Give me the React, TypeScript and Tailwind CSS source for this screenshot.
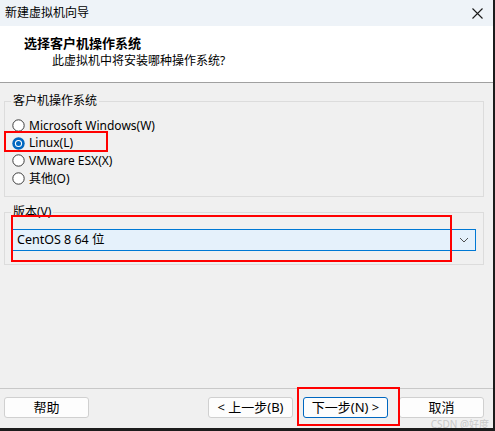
import React from "react";

const font = { fontFamily: '"Noto Sans", "Noto Sans CJK SC", sans-serif' };

type RadioProps = { label: string; checked?: boolean };

const Radio = ({ label, checked }: RadioProps) => (
  <div className="flex h-[17.6px] items-center gap-[4px] pl-[7px]">
    <svg width="13" height="13" viewBox="0 0 13 13" className="shrink-0">
      {checked ? (
        <>
          <circle cx="6.5" cy="6.5" r="6.2" fill="#0067c0" />
          <circle cx="6.5" cy="6.5" r="3.6" fill="#ffffff" />
          <circle cx="6.5" cy="6.5" r="2.5" fill="#0067c0" />
        </>
      ) : (
        <circle cx="6.5" cy="6.5" r="5.7" fill="#ffffff" stroke="#3c3c3c" strokeWidth="1" />
      )}
    </svg>
    <span className="text-[12px] leading-none text-[#000]">{label}</span>
  </div>
);

type BtnProps = { label: string; primary?: boolean };

const Btn = ({ label, primary }: BtnProps) => (
  <button
    className={
      primary
        ? "flex h-[21px] w-[85px] items-center justify-center rounded-[3px] border border-[#0067c0] bg-[#fdfdfd] text-[13px] text-black"
        : "flex h-[21px] w-[85px] items-center justify-center rounded-[3px] border border-[#d0d0d0] bg-[#fdfdfd] text-[13px] text-black"
    }
  >
    {label}
  </button>
);

export default function App() {
  return (
    <div
      className="relative flex h-[431px] w-[495px] flex-col overflow-hidden border-r-[2px] border-b-[3px] border-[#1c1c1c] bg-[#f0f0f0]"
      style={font}
    >
      {/* title bar */}
      <div className="flex h-[26px] shrink-0 items-center justify-between bg-[#eef3f8] pl-[5px] pr-[10px]">
        <span className="text-[12px] text-black">新建虚拟机向导</span>
        <svg width="11" height="11" viewBox="0 0 11 11">
          <path d="M0.5 0.5 L10.5 10.5 M10.5 0.5 L0.5 10.5" stroke="#1a1a1a" strokeWidth="1.1" />
        </svg>
      </div>

      {/* header */}
      <div className="flex h-[57px] shrink-0 flex-col border-b border-[#a0a0a0] bg-white pl-[24px] pt-[8px]">
        <span className="h-[18px] text-[13px] leading-[18px] font-bold text-black">选择客户机操作系统</span>
        <span className="pl-[28px] text-[12px] leading-[18px] text-black">此虚拟机中将安装哪种操作系统?</span>
      </div>

      {/* body */}
      <div className="flex flex-1 flex-col px-[4px] pt-[10px]">
        <fieldset className="h-[104px] w-[480px] border border-[#dcdcdc] px-0 pt-[8px]">
          <legend className="ml-[6px] px-[2px] text-[12px] leading-[16px] text-black">客户机操作系统</legend>
          <Radio label="Microsoft Windows(W)" />
          <Radio label="Linux(L)" checked />
          <Radio label="VMware ESX(X)" />
          <Radio label="其他(O)" />
        </fieldset>

        <fieldset className="mt-[7px] h-[61px] w-[480px] border border-[#dcdcdc] px-0 pt-[9px]">
          <legend className="ml-[6px] px-[2px] text-[12px] leading-[16px] text-black">版本(V)</legend>
          <div className="ml-[7px] flex h-[22px] w-[464px] items-center justify-between border border-[#0078d4] bg-[#e5f1fb] pl-[4px] pr-[6px]">
            <span className="text-[12.5px] text-black">CentOS 8 64 位</span>
            <svg width="10" height="6" viewBox="0 0 10 6">
              <path d="M1 1 L5 5 L9 1" stroke="#505050" strokeWidth="1" fill="none" />
            </svg>
          </div>
        </fieldset>
      </div>

      {/* footer */}
      <div className="flex h-[40px] shrink-0 items-start justify-between border-t border-[#c8c8c8] pl-[4px] pr-[9px] pt-[8px]">
        <Btn label="帮助" />
        <div className="flex gap-[10px]">
          <Btn label="< 上一步(B)" />
          <Btn label="下一步(N) >" primary />
          <div className="ml-[1px]">
            <Btn label="取消" />
          </div>
        </div>
      </div>

      {/* annotations */}
      <div className="absolute left-[4px] top-[131px] h-[21px] w-[104px] border-2 border-[#ff0000]" />
      <div className="absolute left-[11px] top-[215px] h-[47px] w-[441px] border-2 border-[#ff0000]" />
      <div className="absolute left-[297px] top-[387px] h-[39px] w-[103px] border-2 border-[#ff0000]" />
      <span className="absolute right-[4px] top-[419px] text-[10px] leading-none text-[#c8c8c8]">CSDN @好度</span>
    </div>
  );
}
